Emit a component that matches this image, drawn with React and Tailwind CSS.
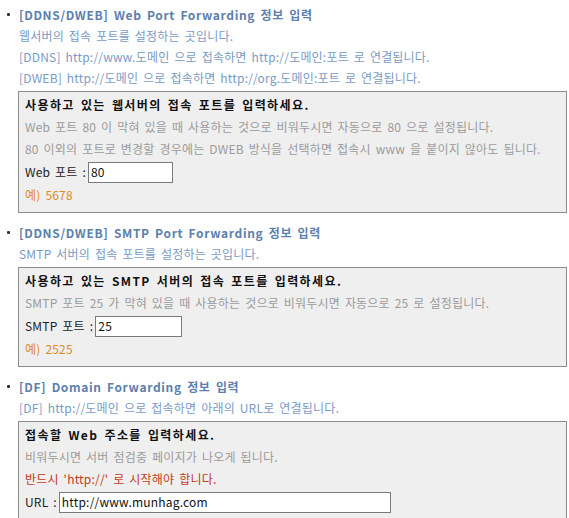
import React from "react";

const font = { fontFamily: '"Noto Sans CJK KR", "Noto Sans", sans-serif' };

function Bullet() {
  return (
    <div className="w-[18px] shrink-0 flex justify-start pl-[7px] pt-[9px]">
      <div className="w-[3px] h-[3px] bg-[#333] rounded-[1px]" />
    </div>
  );
}

function Title({ children }) {
  return (
    <div className="pl-[1px] leading-[21px] text-[12px] font-bold text-[#5d80ad] tracking-[0.65px] [word-spacing:2px]">
      {children}
    </div>
  );
}

function Desc({ children }) {
  return (
    <div className="pl-[1px] leading-[21px] text-[12px] text-[#7a9bc6] tracking-[0.2px] [word-spacing:2px]">
      {children}
    </div>
  );
}

function Box({ children }) {
  return (
    <div className="mt-[3px] border border-[#8c8c8c] bg-[#efefef] pl-[6px] pt-[2px] pb-[6px] text-[12px] tracking-[0.2px] [word-spacing:2px]">
      {children}
    </div>
  );
}

function Head({ children }) {
  return <div className="leading-[22px] font-bold text-[#111] tracking-[1.4px]">{children}</div>;
}

function Gray({ children }) {
  return <div className="leading-[22px] text-[#9b9b9b]">{children}</div>;
}

function InputRow({ label, value, width }) {
  return (
    <div className="h-[24px] flex items-center text-[#222]">
      <span>{label}</span>
      <div
        className={`ml-[2px] h-[21px] border border-[#7a7a7a] bg-white flex items-center pl-[2px] text-[#111] ${width}`}
      >
        {value}
      </div>
    </div>
  );
}

function Example({ children }) {
  return <div className="leading-[22px] text-[#e08a1e]">{children}</div>;
}

export default function App() {
  return (
    <div className="w-[569px] h-[518px] overflow-hidden bg-white pt-[4px] pr-[2px]" style={font}>
      <div className="flex">
        <Bullet />
        <div className="flex-1">
          <Title>[DDNS/DWEB] Web Port Forwarding 정보 입력</Title>
          <Desc>웹서버의 접속 포트를 설정하는 곳입니다.</Desc>
          <Desc>[DDNS] http://www.도메인 으로 접속하면 http://도메인:포트 로 연결됩니다.</Desc>
          <Desc>[DWEB] http://도메인 으로 접속하면 http://org.도메인:포트 로 연결됩니다.</Desc>
          <Box>
            <Head>사용하고 있는 웹서버의 접속 포트를 입력하세요.</Head>
            <Gray>Web 포트 80 이 막혀 있을 때 사용하는 것으로 비워두시면 자동으로 80 으로 설정됩니다.</Gray>
            <Gray>80 이외의 포트로 변경할 경우에는 DWEB 방식을 선택하면 접속시 www 을 붙이지 않아도 됩니다.</Gray>
            <InputRow label="Web 포트 :" value="80" width="w-[85px]" />
            <Example>예) 5678</Example>
          </Box>
        </div>
      </div>

      <div className="flex mt-[9px]">
        <Bullet />
        <div className="flex-1">
          <Title>[DDNS/DWEB] SMTP Port Forwarding 정보 입력</Title>
          <Desc>SMTP 서버의 접속 포트를 설정하는 곳입니다.</Desc>
          <Box>
            <Head>사용하고 있는 SMTP 서버의 접속 포트를 입력하세요.</Head>
            <Gray>SMTP 포트 25 가 막혀 있을 때 사용하는 것으로 비워두시면 자동으로 25 로 설정됩니다.</Gray>
            <InputRow label="SMTP 포트 :" value="25" width="w-[87px]" />
            <Example>예) 2525</Example>
          </Box>
        </div>
      </div>

      <div className="flex mt-[9px]">
        <Bullet />
        <div className="flex-1">
          <Title>[DF] Domain Forwarding 정보 입력</Title>
          <Desc>[DF] http://도메인 으로 접속하면 아래의 URL로 연결됩니다.</Desc>
          <Box>
            <Head>접속할 Web 주소를 입력하세요.</Head>
            <Gray>비워두시면 서버 점검중 페이지가 나오게 됩니다.</Gray>
            <div className="leading-[22px] text-[#c43a1c]">반드시 'http://' 로 시작해야 합니다.</div>
            <InputRow label="URL :" value="http://www.munhag.com" width="w-[332px]" />
          </Box>
        </div>
      </div>
    </div>
  );
}
